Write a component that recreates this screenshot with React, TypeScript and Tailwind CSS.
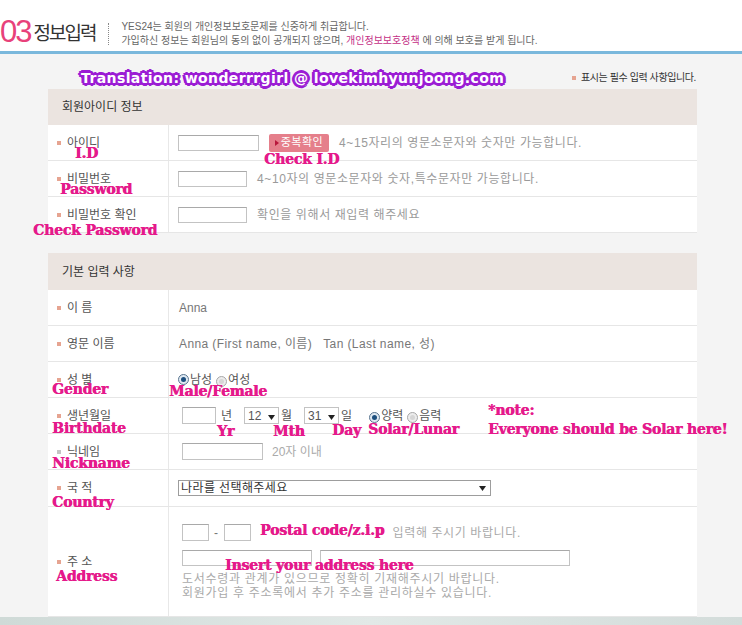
import type { ReactNode } from "react"

const kr = "font-['Liberation_Sans','Noto_Sans_CJK_KR',sans-serif]"

function Bullet({ gray = false }: { gray?: boolean }) {
  return <span className={`inline-block w-[4px] h-[4px] shrink-0 ${gray ? "bg-[#c4c4c4]" : "bg-[#e6a491]"}`} />
}

function Row({ label, gray, h = "h-[36px]", children }: { label: string; gray?: boolean; h?: string; children?: ReactNode }) {
  return (
    <div className={`flex ${h} border-b border-[#e6e6e6]`}>
      <div className="w-[121px] shrink-0 flex items-center pl-[9px] gap-[6px] border-r border-[#e8e8e8]">
        <Bullet gray={gray} />
        <span className="text-[12px] text-[#555] whitespace-pre">{label}</span>
      </div>
      <div className="flex-1 flex items-center">{children}</div>
    </div>
  )
}

function Input({ w, h = "h-[16px]" }: { w: string; h?: string }) {
  return <span className={`inline-block ${w} ${h} border border-[#c3c3c3] border-t-[#a9a9a9] bg-white`} />
}

function Radio({ on = false }: { on?: boolean }) {
  return (
    <span
      className={`inline-flex items-center justify-center w-[11px] h-[11px] rounded-full border ${
        on ? "border-[#5a7690] bg-[#dfe9f2]" : "border-[#a8a8a8] bg-[#ececec]"
      }`}
    >
      <span className={`w-[5px] h-[5px] rounded-full ${on ? "bg-[#1d4f7e]" : "bg-[#d6d6d6]"}`} />
    </span>
  )
}

function MiniSelect({ value }: { value: string }) {
  return (
    <span className="inline-flex items-center justify-between w-[35px] h-[17px] border border-[#c3c3c3] bg-white pl-[3px] pr-[3px] text-[12px] text-[#555]">
      {value}
      <svg width="7" height="5" viewBox="0 0 7 5" className="mt-[3px]">
        <path d="M0 0h7L3.5 5z" fill="#222" />
      </svg>
    </span>
  )
}

function Note({ x, y, children }: { x: string; y: string; children: ReactNode }) {
  return (
    <span
      className={`absolute ${x} ${y} whitespace-nowrap leading-4 text-[14px] font-bold text-[#e5198b] font-['DejaVu_Serif',serif] tracking-[-0.2px] [text-shadow:0.6px_0_0_#e5198b]`}
    >
      {children}
    </span>
  )
}

export default function App() {
  return (
    <div className={`relative w-[742px] h-[625px] overflow-hidden bg-[#f4f4f4] ${kr}`}>
      {/* header */}
      <div className="h-[51px] bg-white flex items-start pt-[16px]">
        <span className="text-[31px] leading-[32px] text-[#e8417a] tracking-[-2px] font-['Liberation_Sans',sans-serif]">03</span>
        <span className="ml-[3px] mt-[5px] text-[19px] leading-[26px] text-[#333] tracking-[-2px]">정보입력</span>
        <span className="ml-[13px] mt-[7px] h-[22px] border-l border-dotted border-[#888]" />
        <div className="ml-[12px] mt-[4px] text-[10px] leading-[14px] text-[#666]">
          <div>YES24는 회원의 개인정보보호문제를 신중하게 취급합니다.</div>
          <div>
            가입하신 정보는 회원님의 동의 없이 공개되지 않으며, <span className="text-[#c42f86]">개인정보보호정책</span> 에 의해 보호를 받게 됩니다.
          </div>
        </div>
      </div>
      <div className="h-[3px] bg-[#7ab8dc]" />

      <div className="pl-[48px] w-[697px]">
        <div className="h-[35px] flex items-end justify-end pb-[4px] pr-[1px]">
          <span className="flex items-center gap-[5px] text-[10px] text-[#333] tracking-[-0.4px]">
            <Bullet />
            표시는 필수 입력 사항입니다.
          </span>
        </div>

        {/* section 1 */}
        <div className="bg-white">
          <div className="h-[36px] bg-[#ebe4e0] flex items-center pl-[14px] text-[12px] text-[#333]">회원아이디 정보</div>
          <Row label="아이디">
            <span className="ml-[9px] flex items-center">
              <Input w="w-[81px]" />
              <span className="ml-[10px] h-[18px] w-[60px] flex items-center justify-center gap-[2px] rounded-[2px] bg-[#e57f8b] text-[11px] text-white tracking-[0.5px]">
                <svg width="4" height="6" viewBox="0 0 4 6">
                  <path d="M0 0l4 3-4 3z" fill="#b8183c" />
                </svg>
                중복확인
              </span>
              <span className="ml-[10px] text-[12px] text-[#9a9a9a] tracking-[0.6px]">4~15자리의 영문소문자와 숫자만 가능합니다.</span>
            </span>
          </Row>
          <Row label="비밀번호">
            <span className="ml-[9px] flex items-center">
              <Input w="w-[69px]" />
              <span className="ml-[10px] text-[12px] text-[#9a9a9a] tracking-[0.6px]">4~10자의 영문소문자와 숫자,특수문자만 가능합니다.</span>
            </span>
          </Row>
          <Row label="비밀번호 확인">
            <span className="ml-[9px] flex items-center">
              <Input w="w-[69px]" />
              <span className="ml-[10px] text-[12px] text-[#9a9a9a] tracking-[0.6px]">확인을 위해서 재입력 해주세요</span>
            </span>
          </Row>
        </div>

        <div className="h-[20px]" />

        {/* section 2 */}
        <div className="bg-white">
          <div className="h-[37px] bg-[#ebe4e0] flex items-center pl-[14px] text-[12px] text-[#333]">기본 입력 사항</div>
          <Row label="이 름">
            <span className="ml-[10px] text-[12px] text-[#777]">Anna</span>
          </Row>
          <Row label="영문 이름">
            <span className="ml-[10px] text-[12px] text-[#777] whitespace-pre tracking-[0.4px]">Anna (First name, 이름)   Tan (Last name, 성)</span>
          </Row>
          <Row label="성 별">
            <span className="ml-[9px] flex items-center text-[12px] text-[#555]">
              <Radio on />
              <span className="ml-[1px]">남성</span>
              <span className="ml-[4px]"><Radio /></span>
              <span className="ml-[1px]">여성</span>
            </span>
          </Row>
          <Row label="생년월일">
            <span className="ml-[13px] flex items-center text-[12px] text-[#555]">
              <Input w="w-[34px]" h="h-[17px]" />
              <span className="ml-[5px]">년</span>
              <span className="ml-[12px]"><MiniSelect value="12" /></span>
              <span className="ml-[2px]">월</span>
              <span className="ml-[12px]"><MiniSelect value="31" /></span>
              <span className="ml-[2px]">일</span>
              <span className="ml-[17px]"><Radio on /></span>
              <span className="ml-[1px]">양력</span>
              <span className="ml-[4px]"><Radio /></span>
              <span className="ml-[1px]">음력</span>
            </span>
          </Row>
          <Row label="닉네임" gray>
            <span className="ml-[13px] flex items-center">
              <Input w="w-[81px]" h="h-[17px]" />
              <span className="ml-[9px] text-[12px] text-[#aaa]">20자 이내</span>
            </span>
          </Row>
          <Row label="국 적" h="h-[37px]">
            <span className="ml-[9px] w-[313px] h-[16px] flex items-center justify-between border border-[#9d9d9d] bg-white pl-[2px] pr-[4px] text-[12px] text-[#333] tracking-[0.4px]">
              나라를 선택해주세요
              <svg width="7" height="5" viewBox="0 0 7 5">
                <path d="M0 0h7L3.5 5z" fill="#222" />
              </svg>
            </span>
          </Row>
          <Row label="주 소" h="h-[110px]">
            <div className="ml-[13px] flex flex-col">
              <div className="flex items-center text-[12px] text-[#aaa] tracking-[0.6px]">
                <Input w="w-[27px]" h="h-[17px]" />
                <span className="mx-[5px] text-[#777]">-</span>
                <Input w="w-[27px]" h="h-[17px]" />
                <span className="ml-[142px]">입력해 주시기 바랍니다.</span>
              </div>
              <div className="flex items-center gap-[8px] mt-[8px]">
                <Input w="w-[130px]" />
                <Input w="w-[250px]" />
              </div>
              <div className="mt-[6px] text-[12px] leading-[14px] text-[#aaa] tracking-[0.7px]">
                <div>도서수령과 관계가 있으므로 정확히 기재해주시기 바랍니다.</div>
                <div>회원가입 후 주소록에서 추가 주소를 관리하실수 있습니다.</div>
              </div>
            </div>
          </Row>
        </div>
      </div>
      <div className="absolute left-0 right-0 bottom-0 h-[8px] bg-gradient-to-r from-[#cfdad7] via-[#e2e9e7] to-[#d3dcda]" />

      {/* translation overlay */}
      <span className="absolute left-[81px] top-[68px] whitespace-nowrap leading-[20px] text-[14px] font-bold text-white font-['DejaVu_Sans',sans-serif] tracking-[0.4px] [text-shadow:2px_0_0_#9b1cd4,-2px_0_0_#9b1cd4,0_2px_0_#9b1cd4,0_-2px_0_#9b1cd4,2px_2px_0_#9b1cd4,-2px_-2px_0_#9b1cd4,2px_-2px_0_#9b1cd4,-2px_2px_0_#9b1cd4,3px_0_0_#9b1cd4,-3px_0_0_#9b1cd4,0_3px_0_#9b1cd4,0_-3px_0_#9b1cd4]">
        Translation: wonderrrgirl @ lovekimhyunjoong.com
      </span>

      <Note x="left-[75px]" y="top-[145px]">I.D</Note>
      <Note x="left-[264px]" y="top-[151px]">Check I.D</Note>
      <Note x="left-[60px]" y="top-[181px]">Password</Note>
      <Note x="left-[33px]" y="top-[222px]">Check Password</Note>
      <Note x="left-[52px]" y="top-[381px]">Gender</Note>
      <Note x="left-[169px]" y="top-[383px]">Male/Female</Note>
      <Note x="left-[52px]" y="top-[420px]">Birthdate</Note>
      <Note x="left-[217px]" y="top-[423px]">Yr</Note>
      <Note x="left-[273px]" y="top-[423px]">Mth</Note>
      <Note x="left-[332px]" y="top-[422px]">Day</Note>
      <Note x="left-[368px]" y="top-[421px]">Solar/Lunar</Note>
      <Note x="left-[488px]" y="top-[402px]">*note:</Note>
      <Note x="left-[488px]" y="top-[421px]">Everyone should be Solar here!</Note>
      <Note x="left-[52px]" y="top-[455px]">Nickname</Note>
      <Note x="left-[52px]" y="top-[494px]">Country</Note>
      <Note x="left-[260px]" y="top-[522px]">Postal code/z.i.p</Note>
      <Note x="left-[225px]" y="top-[557px]">Insert your address here</Note>
      <Note x="left-[56px]" y="top-[568px]">Address</Note>
    </div>
  )
}
